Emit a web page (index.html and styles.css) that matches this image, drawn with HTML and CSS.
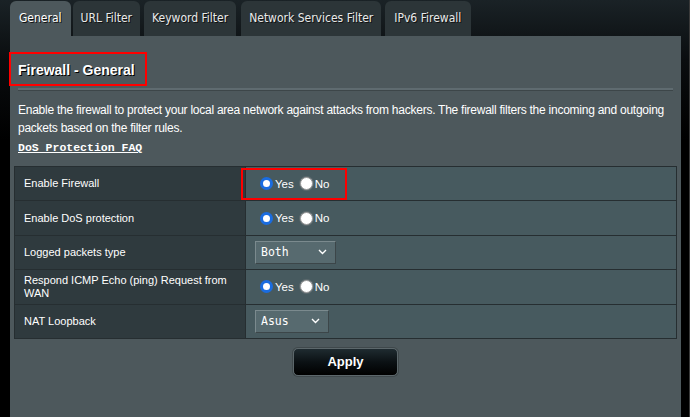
FILE: index.html
```html
<!DOCTYPE html>
<html>
<head>
<meta charset="utf-8">
<link rel="stylesheet" href="styles.css">
</head>
<body>
<div class="page">
  <div class="tabs">
    <div class="tab active">General</div>
    <div class="tab">URL Filter</div>
    <div class="tab">Keyword Filter</div>
    <div class="tab">Network Services Filter</div>
    <div class="tab">IPv6 Firewall</div>
  </div>
  <div class="panel">
    <div class="title-box"><h1 class="title">Firewall - General</h1></div>
    <div class="sep"></div>
    <p class="desc">Enable the firewall to protect your local area network against attacks from hackers. The firewall filters the incoming and outgoing packets based on the filter rules.</p>
    <a class="faq">DoS Protection FAQ</a>
    <table class="form">
      <tr>
        <th>Enable Firewall</th>
        <td><span class="radios mark"><span class="radio on"></span><span class="lbl">Yes</span><span class="radio"></span><span class="lbl">No</span></span></td>
      </tr>
      <tr>
        <th>Enable DoS protection</th>
        <td><span class="radios"><span class="radio on"></span><span class="lbl">Yes</span><span class="radio"></span><span class="lbl">No</span></span></td>
      </tr>
      <tr>
        <th>Logged packets type</th>
        <td><span class="select w81">Both<svg class="chev" width="9" height="6" viewBox="0 0 9 6"><path d="M1 1l3.5 3.5L8 1" fill="none" stroke="#fff" stroke-width="1.4"/></svg></span></td>
      </tr>
      <tr>
        <th>Respond ICMP Echo (ping) Request from WAN</th>
        <td><span class="radios"><span class="radio on"></span><span class="lbl">Yes</span><span class="radio"></span><span class="lbl">No</span></span></td>
      </tr>
      <tr>
        <th>NAT Loopback</th>
        <td><span class="select w74">Asus<svg class="chev" width="9" height="6" viewBox="0 0 9 6"><path d="M1 1l3.5 3.5L8 1" fill="none" stroke="#fff" stroke-width="1.4"/></svg></span></td>
      </tr>
    </table>
    <div class="actions"><button class="apply">Apply</button></div>
  </div>
</div>
</body>
</html>
```
FILE: styles.css
```css
html, body {
  margin: 0;
  padding: 0;
  height: 100%;
  overflow: hidden;
}
body {
  background: linear-gradient(180deg, #1a2226 0px, #0a0d0f 60px, #000 140px);
  box-shadow: inset -1px 0 0 #3a3a3a;
  font-family: "Liberation Sans", Arial, sans-serif;
  color: #fff;
}
.page {
  padding-left: 10px;
  width: 671px;
  height: 100%;
}
.tabs {
  display: flex;
  gap: 4px;
  padding-top: 1px;
  height: 35px;
}
.tab {
  height: 35px;
  box-sizing: border-box;
  padding: 10px 8px 0;
  background: #2c3538;
  border-radius: 6px 6px 0 0;
  font-family: "DejaVu Sans Condensed", Tahoma, sans-serif;
  font-size: 12px;
  color: #e8eaea;
  text-shadow: 1px 1px 0 #111;
}
.tab:nth-child(1) { padding: 10px 9px 0; }
.tab:nth-child(2) { margin-left: -2px; }
.tab:nth-child(4) { margin-left: 1px; }
.tab:nth-child(5) { padding: 10px 10px 0 9px; }
.tab.active {
  background: #4d585c;
  color: #fff;
}
.panel {
  background: #4d585c;
  height: 381px;
  padding: 16px 4px 0 4px;
  box-sizing: border-box;
}
.title-box {
  display: inline-block;
  margin-left: -5px;
  border: 2px solid #f00;
  padding: 8px 10px 5px 7px;
}
.title {
  margin: 0;
  font-size: 14px;
  font-weight: bold;
  color: #fff;
  text-shadow: 1px 1px 0 #000;
  line-height: 17px;
}
.sep {
  margin: 2px 4px 0 4px;
  height: 2px;
  background: #5f6b70;
  border-bottom: 1px solid #3d4649;
}
.desc {
  margin: 10px 0 0 4px;
  font-size: 12px;
  letter-spacing: -0.25px;
  line-height: 18px;
  color: #fff;
}
.faq {
  display: inline-block;
  margin: 1px 0 0 4px;
  font-family: "Liberation Mono", "Courier New", monospace;
  font-size: 11.5px;
  font-weight: bold;
  color: #fff;
  text-decoration: underline;
  line-height: 20px;
}
.form {
  margin-top: 8px;
  width: 663px;
  border-collapse: collapse;
  border: 1px solid #222a2d;
}
.form th, .form td {
  height: 34.4px;
  box-sizing: border-box;
  border: 1px solid #262e31;
  padding: 0;
}
.form th {
  width: 231px;
  background: #2f3a3e;
  text-align: left;
  font-weight: normal;
  font-size: 11px;
  line-height: 13px;
  padding: 0 10px 0 9px;
  color: #fff;
}
.form td {
  background: #475a5f;
  padding-left: 9px;
  font-size: 11px;
}
.radios {
  display: inline-flex;
  align-items: center;
  height: 32px;
  box-sizing: border-box;
  padding: 0 16px 0 17px;
  border: 2px solid transparent;
  margin-left: -14px;
  vertical-align: middle;
}
.radios.mark {
  border-color: #f00;
}
.radio {
  display: inline-block;
  width: 13px;
  height: 13px;
  border-radius: 50%;
  background: #fff;
  border: 1px solid #9a9a9a;
  box-sizing: border-box;
  box-shadow: 0 0 0 1px #5d6a6e;
}
.radio.on {
  border: 3.5px solid #1a6ce0;
  box-shadow: none;
}
.lbl {
  margin: 0 6px 0 2px;
  font-size: 11.5px;
}
.lbl:last-child { margin-right: 0; }
.select {
  display: inline-flex;
  align-items: center;
  justify-content: space-between;
  height: 23px;
  box-sizing: border-box;
  background: #576a6f;
  border: 1px solid #7b8a8e;
  border-right-color: #3c4649;
  border-bottom-color: #3c4649;
  font-family: "DejaVu Sans Mono", monospace;
  font-size: 11.5px;
  color: #fff;
  padding: 0 8px 0 5px;
  vertical-align: middle;
}
.w81 { width: 81px; }
.w74 { width: 74px; }
.actions {
  display: flex;
  justify-content: center;
  margin-top: 9px;
}
.apply {
  width: 105px;
  height: 28px;
  border-radius: 5px;
  border: 1px solid #5c676b;
  background: linear-gradient(180deg, #1f2b30 0%, #0b1114 50%, #000 100%);
  color: #fff;
  font-family: "Liberation Sans", Arial, sans-serif;
  font-weight: bold;
  font-size: 13px;
  box-shadow: 0 0 0 1px #3f484b;
}
```
